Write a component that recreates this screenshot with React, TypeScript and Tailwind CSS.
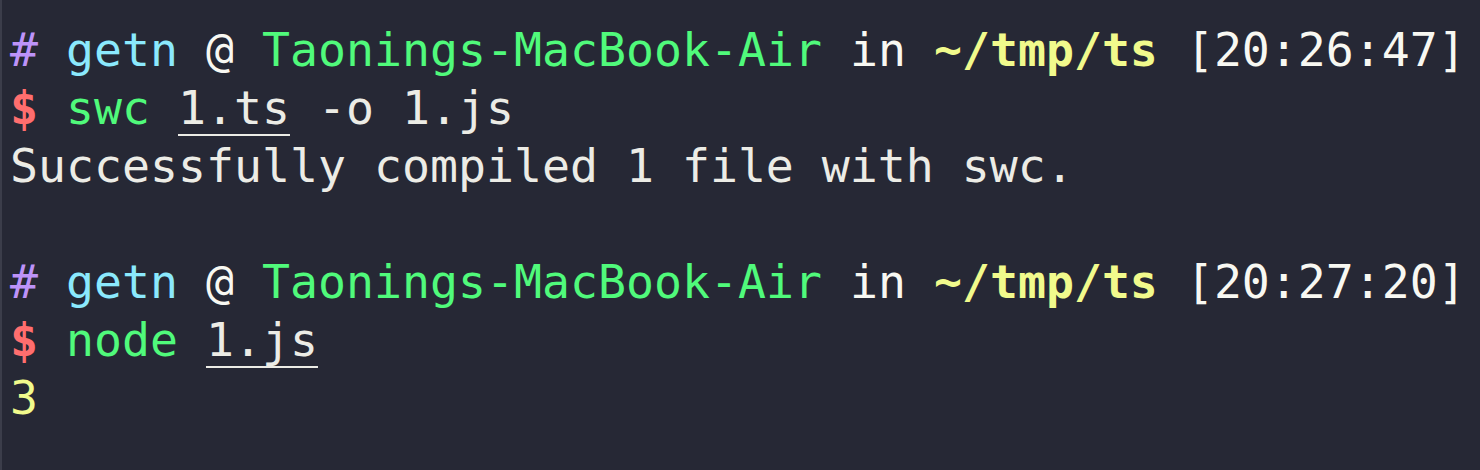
export default function App() {
  const mono = { fontFamily: '"DejaVu Sans Mono", "Liberation Mono", monospace' };

  const prompt = (time: string) => (
    <div>
      <span className="text-[#bd93f9]">#</span> <span className="text-[#8be9fd]">getn</span>{" "}
      <span className="text-[#f8f8f2]">@</span> <span className="text-[#50fa7b]">Taonings-MacBook-Air</span>{" "}
      <span className="text-[#f8f8f2]">in</span> <span className="font-bold text-[#f1fa8c]">~/tmp/ts</span>{" "}
      <span className="text-[#f8f8f2]">[{time}]</span>
    </div>
  );

  return (
    <div
      className="w-[1480px] h-[470px] bg-[#262835] border-l-2 border-[#3b3d4a] pl-[8px] pt-[21px] text-[46.5px] leading-[58px] text-[#ececE6] whitespace-pre overflow-hidden"
      style={mono}
    >
      {prompt("20:26:47")}
      <div>
        <span className="font-bold text-[#ff6e6e]">$</span> <span className="text-[#50fa7b]">swc</span>{" "}
        <span className="underline decoration-2 underline-offset-[10px]">1.ts</span> -o 1.js
      </div>
      <div>Successfully compiled 1 file with swc.</div>
      <div>&nbsp;</div>
      {prompt("20:27:20")}
      <div>
        <span className="font-bold text-[#ff6e6e]">$</span> <span className="text-[#50fa7b]">node</span>{" "}
        <span className="underline decoration-2 underline-offset-[10px]">1.js</span>
      </div>
      <div className="text-[#f1fa8c]">3</div>
    </div>
  );
}
